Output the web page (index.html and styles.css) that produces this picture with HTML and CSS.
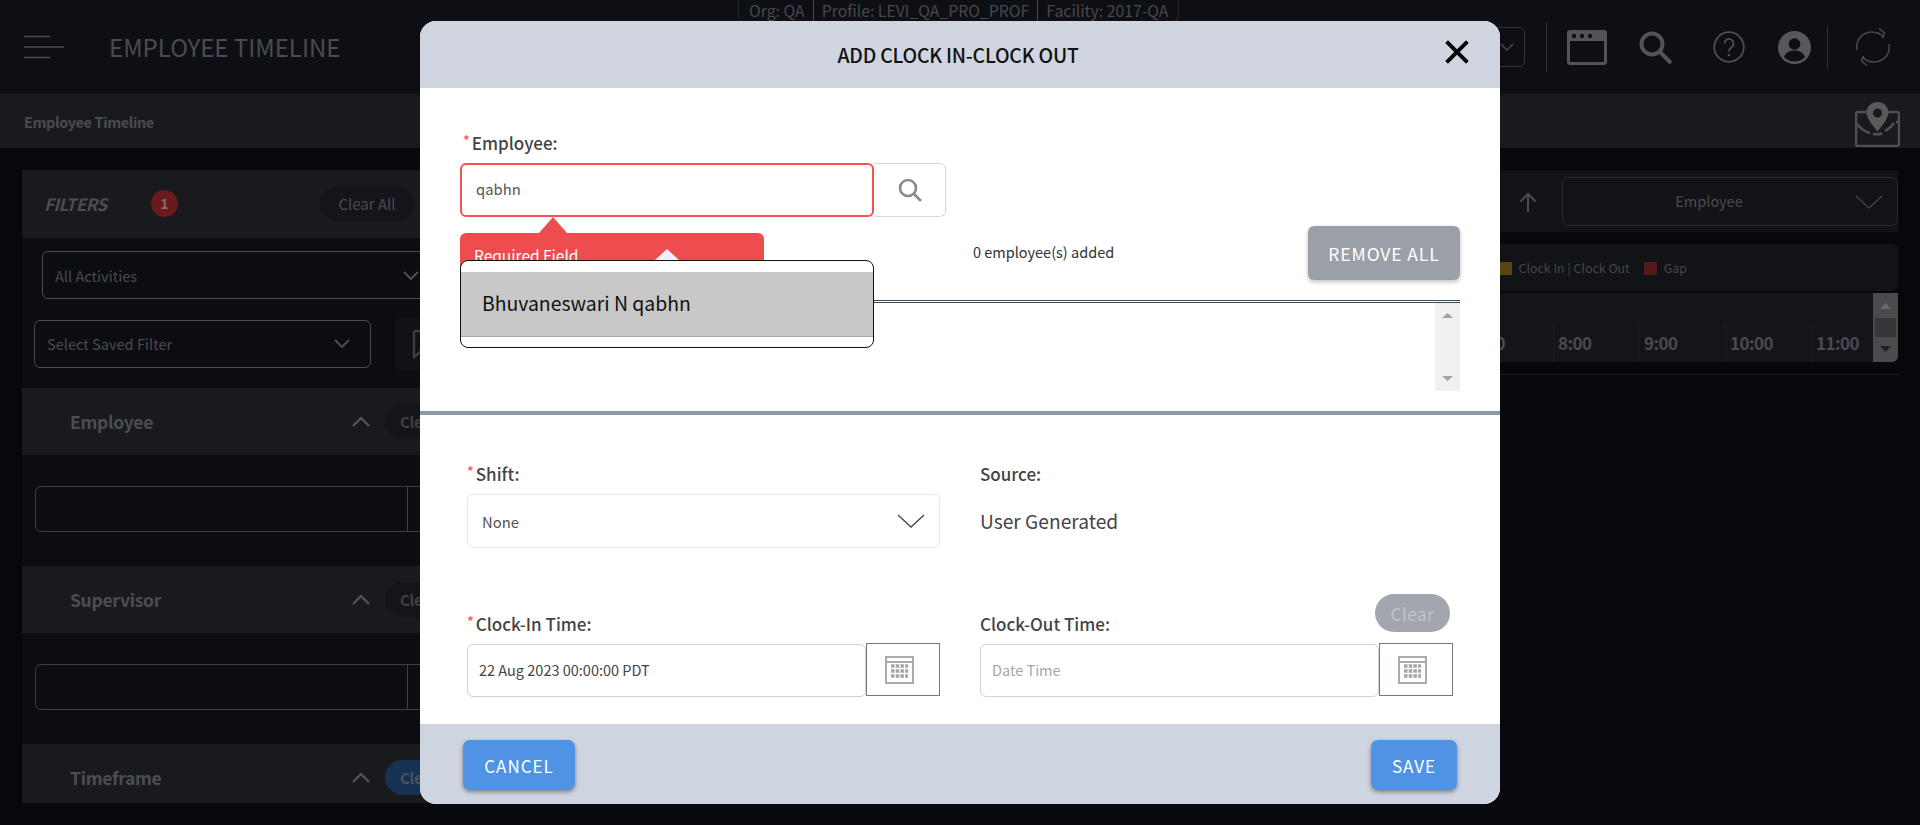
FILE: index.html
```html
<!DOCTYPE html>
<html lang="en">
<head>
<meta charset="utf-8">
<title>Employee Timeline</title>
<link rel="stylesheet" href="styles.css">
</head>
<body>
<div class="app">
  <div class="org-banner"><span>Org: QA</span><span>Profile: LEVI_QA_PRO_PROF</span><span>Facility: 2017-QA</span></div>
  <header class="topbar">
    <svg class="menu-icon" viewBox="0 0 40 24"><path d="M0 1.5h26M0 12h40M0 22.500h26"/></svg>
    <h1 class="app-title">EMPLOYEE TIMELINE</h1>
    <div class="top-actions">
      <div class="top-select"><svg class="top-chev" viewBox="0 0 14 8"><path d="M1 1l6 6 6-6"/></svg></div>
      <i class="vline vline-a"></i>
      <svg class="ic-window" viewBox="0 0 40 35"><path fill-rule="evenodd" d="M3 0h34a3 3 0 0 1 3 3v29a3 3 0 0 1-3 3H3a3 3 0 0 1-3-3V3a3 3 0 0 1 3-3zM3 11v21h34V11z"/><circle class="hole" cx="7" cy="6" r="2.200"/><circle class="hole" cx="15" cy="6" r="2.200"/><circle class="hole" cx="23" cy="6" r="2.200"/></svg>
      <svg class="ic-search" viewBox="0 0 33 33"><circle cx="13" cy="13" r="10.500"/><path d="M21 21l11 11"/></svg>
      <svg class="ic-help" viewBox="0 0 32 32"><circle cx="16" cy="16" r="14.800"/><path d="M11.500 12.500a4.500 4.500 0 1 1 7 3.700c-1.700 1.200-2.500 2-2.500 4.300"/><circle class="dot" cx="16" cy="24" r="1.300"/></svg>
      <svg class="ic-user" viewBox="0 0 33 33"><circle cx="16.500" cy="16.500" r="16.500"/><circle class="hole" cx="16.500" cy="13" r="5.800"/><path class="hole" d="M6 26c2-5 6-6.500 10.500-6.500S25 21 27 26c-3 3-6.500 4.500-10.500 4.500S9 29 6 26z"/></svg>
      <i class="vline vline-b"></i>
      <svg class="ic-sync" viewBox="0 0 36 38"><path d="M2 22C0 10 10 2 21 4.500c3 .7 6 2.500 8 5M34 16c2 12-8 20-19 17.500-3-.7-6-2.500-8-5"/><path d="M24 .5l5.500 4.500-2 5M12 37.500L6.500 33l2-5"/></svg>
    </div>
  </header>
  <div class="subbar">
    <span class="crumb">Employee Timeline</span>
    <svg class="ic-map" viewBox="0 0 45 45"><path class="map-box" d="M12 10H3a2 2 0 0 0-2 2v30a2 2 0 0 0 2 2h39a2 2 0 0 0 2-2V12a2 2 0 0 0-2-2h-9"/><path class="map-trail" d="M2 22c4 5 9 8 13 9M18 32c3 .5 6 .5 9-.5M30 29c4-2 7-5 9-8M41 20h3"/><path class="map-pin" fill-rule="evenodd" d="M22.500 0C16 0 11.500 5 11.500 10.500c0 6 7 14 11 19 4-5 11-13 11-19C33.500 5 29 0 22.500 0zm0 6.500a4.500 4.500 0 1 1 0 9 4.500 4.500 0 0 1 0-9z"/></svg>
  </div>
  <main class="content">
    <aside class="filters">
      <div class="filters-head">
        <span class="filters-title">FILTERS</span>
        <span class="badge">1</span>
        <span class="pill pill-all">Clear All</span>
      </div>
      <div class="dark-select activity"><span>All Activities</span><svg class="dim-chev" viewBox="0 0 16 9"><path d="M1 1l7 7 7-7"/></svg></div>
      <div class="saved-row">
        <div class="dark-select saved"><span>Select Saved Filter</span><svg class="dim-chev" viewBox="0 0 16 9"><path d="M1 1l7 7 7-7"/></svg></div>
        <div class="save-btn"><svg class="ic-flag" viewBox="0 0 20 30"><path d="M2 2h18M2 2v26l10-8"/></svg></div>
      </div>
      <section class="f-head"><span>Employee</span><svg class="up-chev" viewBox="0 0 18 11"><path d="M1 10l8-8 8 8"/></svg><span class="pill">Clear</span></section>
      <div class="f-body"><div class="dark-input"><i></i></div></div>
      <section class="f-head"><span>Supervisor</span><svg class="up-chev" viewBox="0 0 18 11"><path d="M1 10l8-8 8 8"/></svg><span class="pill">Clear</span></section>
      <div class="f-body"><div class="dark-input"><i></i></div></div>
      <section class="f-head"><span>Timeframe</span><svg class="up-chev" viewBox="0 0 18 11"><path d="M1 10l8-8 8 8"/></svg><span class="pill pill-blue">Clear</span></section>
    </aside>
    <section class="timeline">
      <div class="tl-tools">
        <svg class="ic-up" viewBox="0 0 18 20"><path d="M9 20V2M1.500 9.500L9 2l7.500 7.500"/></svg>
        <div class="group-select"><span>Employee</span><svg class="wide-chev" viewBox="0 0 28 14"><path d="M1 1l13 12L27 1"/></svg></div>
      </div>
      <div class="legend">
        <i class="swatch gold"></i><span>Clock In | Clock Out</span>
        <i class="swatch red"></i><span>Gap</span>
      </div>
      <div class="times">
        <div class="cell cell-part">0</div>
        <div class="cell">8:00</div>
        <div class="cell">9:00</div>
        <div class="cell">10:00</div>
        <div class="cell cell-last">11:00</div>
        <div class="tl-scroll"><svg viewBox="0 0 25 69"><path class="arr-up" d="M7 16l5.500-6 5.500 6z"/><rect class="thumb" x="2" y="25" width="21" height="19"/><path class="arr-dn" d="M7 53l5.500 6 5.500-6z"/></svg></div>
      </div>
      <div class="tl-rule"></div>
    </section>
  </main>
</div>

<div class="modal">
  <div class="modal-head">
    <h2>ADD CLOCK IN-CLOCK OUT</h2>
    <svg class="ic-close" viewBox="0 0 20 20"><path d="M2 2l16 16M18 2L2 18"/></svg>
  </div>
  <div class="modal-body">
    <div class="employee-block">
      <label class="label label-emp"><span class="req">*</span>Employee:</label>
      <div class="emp-field">
        <div class="emp-input">qabhn</div>
        <div class="emp-search"><svg class="ic-find" viewBox="0 0 24 24"><circle cx="10" cy="10" r="8"/><path d="M16 16l7 7"/></svg></div>
      </div>
      <div class="added-row">
        <span class="added">0 employee(s) added</span>
        <button class="btn-grey">REMOVE ALL</button>
      </div>
      <div class="tooltip"><span>Required Field</span></div>
      <div class="suggest"><div class="suggest-row">Bhuvaneswari N qabhn</div></div>
      <div class="double-line"></div>
      <div class="emp-list">
        <div class="list-scroll"><svg viewBox="0 0 25 88"><path d="M7 15l5.500-5 5.500 5zM7 73l5.500 5 5.500-5z"/></svg></div>
      </div>
    </div>
    <div class="divider"></div>
    <div class="form-grid">
      <div class="col">
        <label class="label"><span class="req">*</span>Shift:</label>
        <div class="shift-select"><span>None</span><svg class="wide-chev-dark" viewBox="0 0 28 14"><path d="M1 1l13 12L27 1"/></svg></div>
      </div>
      <div class="col">
        <label class="label">Source:</label>
        <div class="source-val">User Generated</div>
      </div>
      <div class="col">
        <label class="label"><span class="req">*</span>Clock-In Time:</label>
        <div class="date-field">
          <div class="date-input">22 Aug 2023 00:00:00 PDT</div>
          <div class="cal-btn"><svg class="ic-cal" viewBox="0 0 29 28"><path class="cal-frame" d="M1 1h27v26H1zM1 6h27"/><path class="cal-dots" d="M6 10h17M6 15h17M6 20h17"/></svg></div>
        </div>
      </div>
      <div class="col col-out">
        <label class="label">Clock-Out Time:</label>
        <span class="btn-clear">Clear</span>
        <div class="date-field">
          <div class="date-input placeholder">Date Time</div>
          <div class="cal-btn"><svg class="ic-cal" viewBox="0 0 29 28"><path class="cal-frame" d="M1 1h27v26H1zM1 6h27"/><path class="cal-dots" d="M6 10h17M6 15h17M6 20h17"/></svg></div>
        </div>
      </div>
    </div>
  </div>
  <div class="modal-foot">
    <button class="btn-blue btn-cancel">CANCEL</button>
    <button class="btn-blue btn-save">SAVE</button>
  </div>
</div>
</body>
</html>
```
FILE: styles.css
```css
* { box-sizing: border-box; }
html, body { margin: 0; height: 100%; }
body {
  width: 1920px;
  height: 825px;
  overflow: hidden;
  position: relative;
  background: #07080b;
  font-family: "Noto Sans CJK SC", "Noto Sans", sans-serif;
  color: #4b4c4f;
}
svg { display: block; flex: none; }
h1, h2 { margin: 0; font-weight: 400; }
button { font-family: inherit; border: 0; }
.app { height: 825px; display: flex; flex-direction: column; }

/* banner */
.org-banner {
  position: absolute;
  left: 738px;
  top: 0;
  height: 22px;
  display: flex;
  align-items: center;
  padding: 0 10px;
  border: 1px solid #26272b;
  border-top: 0;
  border-radius: 0 0 6px 6px;
  font-size: 15.800px;
  line-height: 22px;
  color: #47484b;
}
.org-banner span + span { border-left: 1px solid #47484b; margin-left: 8px; padding-left: 8px; }

/* top bar */
.topbar {
  height: 94px;
  flex: none;
  background: #0e0f14;
  display: flex;
  align-items: center;
  padding-left: 24px;
}
.menu-icon { width: 40px; height: 24px; fill: none; stroke: #4a4a4d; stroke-width: 1.500; margin-right: 45px; }
.app-title { font-size: 24px; line-height: 30px; color: #4a4b4e; }
.top-actions { margin-left: auto; height: 94px; display: flex; align-items: center; }
.top-select {
  width: 60px; height: 40px; border: 1px solid #333438; border-radius: 5px;
  display: flex; align-items: center; justify-content: flex-end; padding-right: 10px;
  margin-right: 21px;
}
.top-chev { width: 14px; height: 8px; fill: none; stroke: #47484b; stroke-width: 1.500; }
.vline { display: block; width: 1px; background: #303135; flex: none; }
.vline-a { height: 50px; margin-right: 20px; }
.vline-b { height: 43px; margin: 0 27px 0 16px; }
.ic-window { width: 40px; height: 35px; fill: #545456; margin-right: 32px; }
.hole { fill: #0e0f14; }
.ic-search { width: 33px; height: 33px; fill: none; stroke: #545456; stroke-width: 4; margin-right: 41px; }
.ic-help { width: 32px; height: 32px; fill: none; stroke: #4f4f52; stroke-width: 1.800; margin-right: 33px; }
.ic-help .dot { fill: #4f4f52; stroke: none; }
.ic-user { width: 33px; height: 33px; fill: #58585a; }
.ic-sync { width: 36px; height: 38px; fill: none; stroke: #48494c; stroke-width: 1.500; margin-right: 29px; }

/* sub bar */
.subbar {
  height: 54px; flex: none; background: #191a1e;
  display: flex; align-items: center; justify-content: space-between;
  padding: 0 20px 0 24px;
}
.crumb { font-size: 14.500px; font-weight: 700; color: #4a4b4e; letter-spacing: -0.4px; }
.ic-map { width: 45px; height: 45px; margin-top: 6px; fill: none; }
.map-box { stroke: #505052; stroke-width: 2.500; }
.map-trail { stroke: #505052; stroke-width: 2.500; }
.map-pin { fill: #5a5a5c; }

/* main */
.content { flex: 1; min-height: 0; display: flex; padding: 22px 22px 0; }
.filters { width: 420px; flex: none; height: 633px; overflow: hidden; background: #0c0d11; }
.filters-head {
  height: 68px; background: #191a1e; display: flex; align-items: center; padding: 0 6px 2px 22px;
}
.filters-title { font-size: 17px; font-weight: 700; font-style: italic; color: #4c4d50; width: 101px; letter-spacing: -0.5px; }
.badge {
  width: 27px; height: 27px; border-radius: 50%; background: #6a1a1b; color: #8a6a6a;
  font-size: 14px; font-weight: 700; display: flex; align-items: center; justify-content: center;
  margin-left: 6px;
}
.pill {
  height: 35px; padding: 0 15px; border-radius: 18px; background: #14151a; color: #3f4043;
  font-size: 15px; display: flex; align-items: center; white-space: nowrap; flex: none;
}
.pill-all { margin-left: auto; color: #4a4b4e; width: 94px; justify-content: center; padding: 0; margin-right: 22px; }
.pill-blue { background: #163252; color: #48535f; }
.dark-select {
  height: 48px; border: 1px solid #4a4b4e; border-radius: 6px; display: flex; align-items: center;
  justify-content: space-between; font-size: 14.600px; color: #4a4b4e; padding: 0 20px 0 12px; flex: none;
}
.activity { margin: 13px 0 0 20px; width: 398px; }
.saved-row { display: flex; margin: 18px 0 17px 12px; align-items: center; }
.saved { width: 337px; padding-bottom: 2px; }
.dim-chev { width: 16px; height: 9px; fill: none; stroke: #505154; stroke-width: 1.800; }
.save-btn { width: 50px; height: 54px; margin-left: 24px; background: #111216; border-radius: 6px; display: flex; align-items: center; padding-left: 17px; flex: none; }
.ic-flag { width: 20px; height: 30px; fill: none; stroke: #3d3e41; stroke-width: 2.500; }
.f-head {
  height: 67px; background: #191a1e; display: flex; align-items: center;
  font-size: 17.500px; font-weight: 700; color: #4c4d50; padding-left: 48px; letter-spacing: -0.3px;
}
.f-head > span:first-child { width: 282px; flex: none; }
.up-chev { width: 18px; height: 11px; fill: none; stroke: #56575a; stroke-width: 2; margin-right: 15px; }
.f-body { height: 111px; padding: 31px 0 0 13px; }
.dark-input { width: 420px; height: 46px; border: 1px solid #3e3f42; border-radius: 6px; padding-left: 371px; }
.dark-input i { display: block; width: 1px; height: 44px; background: #3e3f42; }

/* timeline */
.timeline { flex: 1; min-width: 0; margin-left: 18px; display: flex; flex-direction: column; }
.tl-tools { height: 62px; background: #121317; display: flex; align-items: flex-start; justify-content: flex-end; padding-top: 7px; flex: none; }
.ic-up { width: 18px; height: 20px; fill: none; stroke: #4b4c4f; stroke-width: 2; margin: 15px 25px 0 0; }
.group-select {
  width: 336px; height: 49px; border: 1px solid #2a2b2f; border-radius: 6px; display: flex; align-items: center;
  justify-content: center; font-size: 14.500px; color: #4a4b4e; padding: 0 42px 2px 0; position: relative;
}
.wide-chev { position: absolute; right: 14px; top: 17px; width: 28px; height: 14px; fill: none; stroke: #47484b; stroke-width: 1.200; }
.legend {
  height: 47px; margin-top: 12px; flex: none; background: #121317; border-radius: 6px;
  display: flex; align-items: center; justify-content: flex-end; padding: 1px 211px 0 0;
  font-size: 12.400px; color: #45464a;
}
.swatch { width: 13px; height: 13px; margin-right: 7px; flex: none; }
.gold { background: #5a4510; }
.red { background: #541a1b; margin-left: 14px; }
.times {
  height: 69px; margin-top: 2px; flex: none; background: #14151a; display: flex; justify-content: flex-end;
  border-radius: 0 0 6px 0; overflow: hidden;
}
.cell {
  width: 86px; height: 39px; margin-top: 30px; border-left: 1px solid #1c1d22; padding: 9px 0 0 4px;
  font-size: 17px; line-height: 22px; font-weight: 700; color: #4a4b4e; letter-spacing: -0.5px;
}
.cell-part { text-align: right; padding-right: 48px; border-left: 0; }
.cell-last { width: 62px; }
.tl-scroll { width: 25px; background: #4b4b4d; flex: none; }
.tl-scroll svg { width: 25px; height: 69px; }
.arr-up { fill: #6a6a6c; }
.arr-dn { fill: #1f1f22; }
.thumb { fill: #363638; }
.tl-rule { height: 1px; margin-top: 12px; background: #1b1c20; }

/* modal */
.modal {
  position: absolute; left: 420px; top: 21px; width: 1080px; height: 783px;
  background: #fff; border-radius: 16px; overflow: hidden; display: flex; flex-direction: column;
}
.modal-head {
  height: 67px; flex: none; background: #d0d5e0; display: flex; align-items: center; justify-content: center;
  position: relative;
}
.modal-head h2 { font-size: 19.400px; font-weight: 500; color: #111; line-height: 26px; letter-spacing: -0.2px; margin-right: 4px; }
.ic-close { position: absolute; left: 1024px; top: 18px; width: 26px; height: 26px; fill: none; stroke: #050505; stroke-width: 3; }
.modal-body { flex: 1; min-height: 0; overflow: hidden; padding: 45px 40px 0; }
.employee-block { position: relative; }
.label { display: block; height: 20px; line-height: 20px; font-size: 17px; font-weight: 500; color: #444; }
.label-emp { padding-left: 3px; }
.req { color: #f55; font-size: 14px; line-height: 0; vertical-align: 4px; margin-right: 2px; }
.emp-field { display: flex; margin-top: 10px; height: 54px; }
.emp-input {
  width: 414px; border: 2px solid #fb5050; border-radius: 6px; padding-left: 14px; line-height: 48px;
  font-size: 14.800px; color: #555;
}
.emp-search {
  width: 72px; border: 1px solid #d8d8d8; border-left: 0; border-radius: 0 6px 6px 0;
  display: flex; align-items: center; justify-content: center;
}
.ic-find { width: 24px; height: 24px; fill: none; stroke: #8b8b8b; stroke-width: 2.600; }
.added-row { display: flex; align-items: center; height: 54px; margin-top: 9px; padding-left: 513px; }
.added { font-size: 14.500px; color: #333; margin-top: -4px; }
.btn-grey {
  margin-left: auto; width: 152px; height: 54px; border-radius: 6px; background: #9ba0a7; color: #fff;
  font-size: 17.500px; letter-spacing: 0.9px; box-shadow: 0 2px 4px rgba(0,0,0,.25);
}
.tooltip {
  position: absolute; left: 0; top: 100px; width: 304px; height: 60px; background: #ee4c4e; border-radius: 6px;
  color: #fff; font-size: 15.500px; padding: 11px 14px; line-height: 22px;
}
.tooltip::before {
  content: ""; position: absolute; left: 79px; top: -16px; border: 14px solid transparent; border-top: 0;
  border-bottom: 16px solid #ee4c4e;
}
.tooltip::after {
  content: ""; position: absolute; left: 195px; top: 16px; border: 12px solid transparent; border-top: 0;
  border-bottom: 11px solid #f0f0f6;
}
.suggest {
  position: absolute; left: 0; top: 127px; width: 414px; height: 88px; background: #fff; border: 1.500px solid #111;
  border-radius: 8px; padding-top: 11px; overflow: hidden;
}
.suggest-row {
  height: 65px; background: #c8c8c8; border-bottom: 1px solid #a9a9a9; padding-left: 21px; line-height: 62px;
  font-size: 19.400px; color: #111;
}
.double-line { height: 3px; margin-top: 20px; border-top: 1px solid #3d4856; border-bottom: 1px solid #3d4856; }
.emp-list { height: 88px; display: flex; justify-content: flex-end; }
.list-scroll { width: 25px; background: #f0f0f0; }
.list-scroll svg { width: 25px; height: 88px; fill: #a3a3a3; }
.divider { height: 4px; margin: 20px -40px 0; background: #8f98a4; }
.form-grid { display: grid; grid-template-columns: 473px 473px; column-gap: 40px; row-gap: 66px; padding: 49px 0 0 7px; }
.col { position: relative; }
.shift-select {
  height: 54px; margin-top: 10px; border: 1px solid #e8e9ee; border-radius: 6px; display: flex; align-items: center; justify-content: space-between;
  padding: 0 14px; font-size: 14.800px; color: #555;
}
.wide-chev-dark { width: 28px; height: 14px; fill: none; stroke: #444; stroke-width: 1.300; }
.source-val { margin-top: 10px; font-size: 19.200px; color: #444; line-height: 54px; }
.date-field { display: flex; height: 53px; margin-top: 10px; }
.date-input {
  width: 399px; border: 1px solid #ccd1de; border-radius: 6px; padding-left: 11px; line-height: 49px;
  font-size: 14.500px; color: #444;
}
.placeholder { color: #a6a6a6; }
.cal-btn { width: 74px; border: 1.500px solid #777; display: flex; align-items: center; padding-left: 18px; height: 53px; margin-top: -1px; }
.ic-cal { width: 29px; height: 28px; fill: none; }
.cal-frame { stroke: #aaa; stroke-width: 2; }
.cal-dots { stroke: #a5a5a5; stroke-width: 3.500; stroke-dasharray: 3.500 1.200; }
.btn-clear {
  position: absolute; right: 3px; top: -20px; width: 75px; height: 38px; border-radius: 19px; background: #a3a6ae;
  color: #c2c4cb; font-size: 17px; display: flex; align-items: center; justify-content: center; letter-spacing: 0.6px;
}
.modal-foot {
  height: 80px; flex: none; background: #ced4e0; display: flex; justify-content: space-between; padding: 16px 43px 0;
}
.btn-blue {
  height: 50px; border-radius: 7px; background: #4f94e4; color: #fff; font-size: 17px; letter-spacing: 1px;
  box-shadow: 0 2px 4px rgba(0,0,0,.4);
}
.btn-cancel { width: 112px; }
.btn-save { width: 86px; }
```
